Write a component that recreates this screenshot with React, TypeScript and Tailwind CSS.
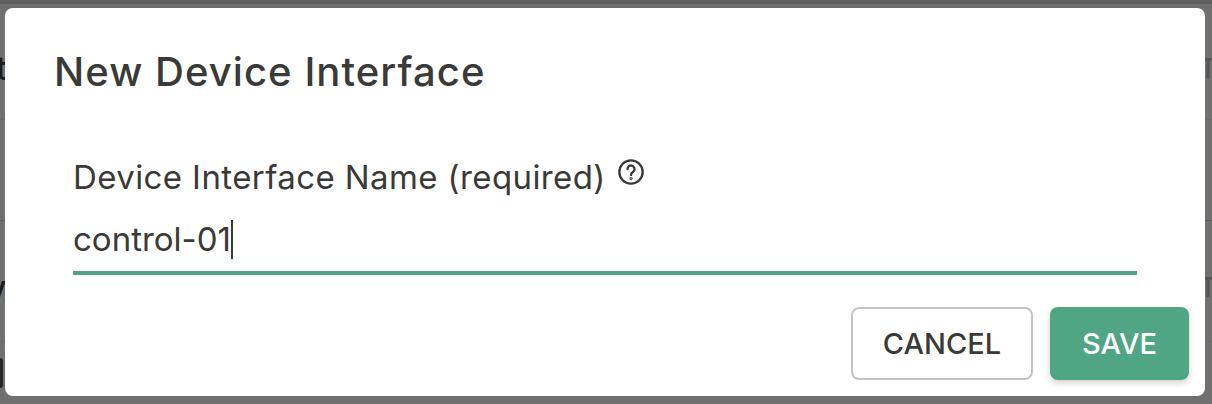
const font = "font-['Inter','Noto_Sans',sans-serif]";

export default function App() {
  return (
    <div className={`relative h-[404px] w-[1212px] overflow-hidden bg-[#707070] ${font}`}>
      {/* page behind the modal */}
      <div className="flex h-full flex-col">
        <div className="h-[4px] bg-[#5f5f5f]" />
        <div className="flex h-[116px] items-start justify-between border-b border-[#6a6a6a] pt-[48px]">
          <span className="-ml-[4px] text-[32px] font-medium leading-[34px] text-[#1c1c1c]">t</span>
          <span className="-mr-[5px] text-[27px] font-medium leading-[34px] text-[#555555]">T</span>
        </div>
        <div className="h-[101px] border-b border-[#5f5f5f]" />
        <div className="flex h-[121px] items-start justify-between border-b border-[#6a6a6a] pt-[50px]">
          <span className="-ml-[12px] text-[32px] font-medium leading-[34px] text-[#1c1c1c]">y</span>
          <span className="-mr-[5px] text-[27px] font-medium leading-[34px] text-[#555555]">T</span>
        </div>
        <div className="mt-[16px] h-[30px] w-[3px] rounded-r-[3px] bg-[#262626]" />
      </div>

      {/* modal */}
      <div className="absolute left-[5px] top-[8px] flex h-[388px] w-[1200px] flex-col rounded-[8px] bg-white text-[#3a3a38]">
        <h2 className="pl-[49px] pt-[40px] text-[40px] font-medium leading-[48px] tracking-[1.05px]">New Device Interface</h2>
        <div className="flex flex-col px-[68px] pt-[61px]">
          <div className="flex h-[40px] items-start gap-[11px]">
            <label className="text-[33px] leading-[40px] tracking-[0.4px]">Device Interface Name (required)</label>
            <svg className="mt-[1px] size-[28px]" viewBox="0 0 24 24" fill="none" stroke="currentColor" strokeWidth="2" strokeLinecap="round">
              <circle cx="12" cy="12" r="10" />
              <path d="M9 9.5a3 3 0 1 1 4.6 2.5c-1 .7-1.6 1.3-1.6 2.5" />
              <circle cx="12" cy="17.6" r=".4" fill="currentColor" />
            </svg>
          </div>
          <div className="flex items-center border-b-[4px] border-[#4fa584] pb-[12px] pt-[22px]">
            <span className="text-[33px] leading-[40px]">control-01</span>
            <span className="h-[39px] w-[2px] bg-[#3a3a38]" />
          </div>
        </div>
        <div className="flex justify-end gap-[17px] pr-[16px] pt-[32px]">
          <button className="flex h-[73px] w-[182px] items-center justify-center rounded-[8px] border-2 border-[#c4c4c4] text-[29px] font-medium">CANCEL</button>
          <button className="flex h-[73px] w-[139px] items-center justify-center rounded-[8px] bg-[#4fa584] text-[29px] font-medium text-white shadow-[0_3px_6px_rgba(0,0,0,0.18)]">SAVE</button>
        </div>
      </div>
    </div>
  );
}
